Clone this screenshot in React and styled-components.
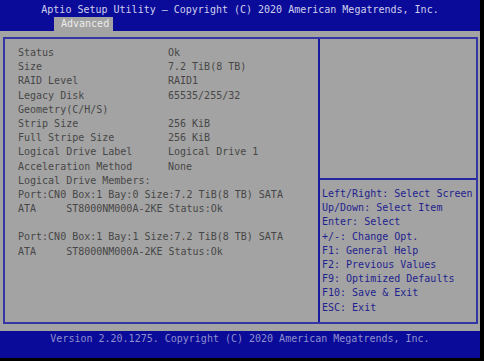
import styled, { createGlobalStyle } from 'styled-components';

const GlobalStyle = createGlobalStyle`
  html, body {
    margin: 0;
    padding: 0;
    background: #000;
  }
  body {
    font-family: "DejaVu Sans Mono", "Liberation Mono", monospace;
    font-size: 10px;
  }
`;

const Screen = styled.div`
  width: 480px;
  height: 358px;
  display: flex;
  flex-direction: column;
  background: #a3a3a3;
`;

const Header = styled.header`
  background: #0b0b9a;
  height: 31px;
  display: flex;
  flex-direction: column;
`;

const Title = styled.div`
  height: 17px;
  line-height: 20px;
  text-align: center;
  color: #cfd0ec;
  white-space: pre;
`;

const TabRow = styled.div`
  flex: 1;
  display: flex;
  padding-left: 54px;
`;

const Tab = styled.div`
  width: 59px;
  background: #a3a3a3;
  color: #ececec;
  line-height: 14px;
  padding-left: 7px;
  box-sizing: border-box;
`;

const Body = styled.main`
  flex: 1;
  padding: 6px 2px 7px 3px;
  display: flex;
`;

const Frame = styled.div`
  flex: 1;
  border: 2px solid #3535a6;
  display: grid;
  grid-template-columns: 315px 1fr;
`;

const LeftPanel = styled.section`
  padding: 7px 0 0 13px;
  border-right: 2px solid #1a1a9c;
`;

const Row = styled.div`
  display: flex;
  height: 14.2px;
  line-height: 14.2px;
  color: #474747;
  white-space: pre;
`;

const Label = styled.span`
  width: 150px;
  flex: none;
`;

const Value = styled.span``;

const Gap = styled.div`
  height: 14.2px;
`;

const RightPanel = styled.section`
  display: flex;
  flex-direction: column;
`;

const HelpTop = styled.div`
  height: 139px;
  border-bottom: 2px solid #2626a2;
`;

const HelpList = styled.div`
  padding: 7px 0 0 2px;
`;

const HelpLine = styled.div`
  height: 14.2px;
  line-height: 14.2px;
  color: #1f1f8e;
  white-space: pre;
`;

const Footer = styled.footer`
  background: #0b0b9a;
  height: 27px;
  line-height: 15px;
  text-align: center;
  color: #8f8fcc;
  white-space: pre;
`;

const info = [
  ['Status', 'Ok'],
  ['Size', '7.2 TiB(8 TB)'],
  ['RAID Level', 'RAID1'],
  ['Legacy Disk', '65535/255/32'],
  ['Geometry(C/H/S)', ''],
  ['Strip Size', '256 KiB'],
  ['Full Stripe Size', '256 KiB'],
  ['Logical Drive Label', 'Logical Drive 1'],
  ['Acceleration Method', 'None'],
];

const members = [
  ['Port:CN0 Box:1 Bay:0 Size:7.2 TiB(8 TB) SATA', 'ATA     ST8000NM000A-2KE Status:Ok'],
  ['Port:CN0 Box:1 Bay:1 Size:7.2 TiB(8 TB) SATA', 'ATA     ST8000NM000A-2KE Status:Ok'],
];

const help = [
  'Left/Right: Select Screen',
  'Up/Down: Select Item',
  'Enter: Select',
  '+/-: Change Opt.',
  'F1: General Help',
  'F2: Previous Values',
  'F9: Optimized Defaults',
  'F10: Save & Exit',
  'ESC: Exit',
];

export default function App() {
  return (
    <>
      <GlobalStyle />
      <Screen>
        <Header>
          <Title>Aptio Setup Utility – Copyright (C) 2020 American Megatrends, Inc.</Title>
          <TabRow>
            <Tab>Advanced</Tab>
          </TabRow>
        </Header>
        <Body>
          <Frame>
            <LeftPanel>
              {info.map(([k, v]) => (
                <Row key={k}>
                  <Label>{k}</Label>
                  <Value>{v}</Value>
                </Row>
              ))}
              <Row>Logical Drive Members:</Row>
              {members.map(([a, b], i) => (
                <div key={i}>
                  {i > 0 && <Gap />}
                  <Row>{a}</Row>
                  <Row>{b}</Row>
                </div>
              ))}
            </LeftPanel>
            <RightPanel>
              <HelpTop />
              <HelpList>
                {help.map((h) => (
                  <HelpLine key={h}>{h}</HelpLine>
                ))}
              </HelpList>
            </RightPanel>
          </Frame>
        </Body>
        <Footer>Version 2.20.1275. Copyright (C) 2020 American Megatrends, Inc.</Footer>
      </Screen>
    </>
  );
}
